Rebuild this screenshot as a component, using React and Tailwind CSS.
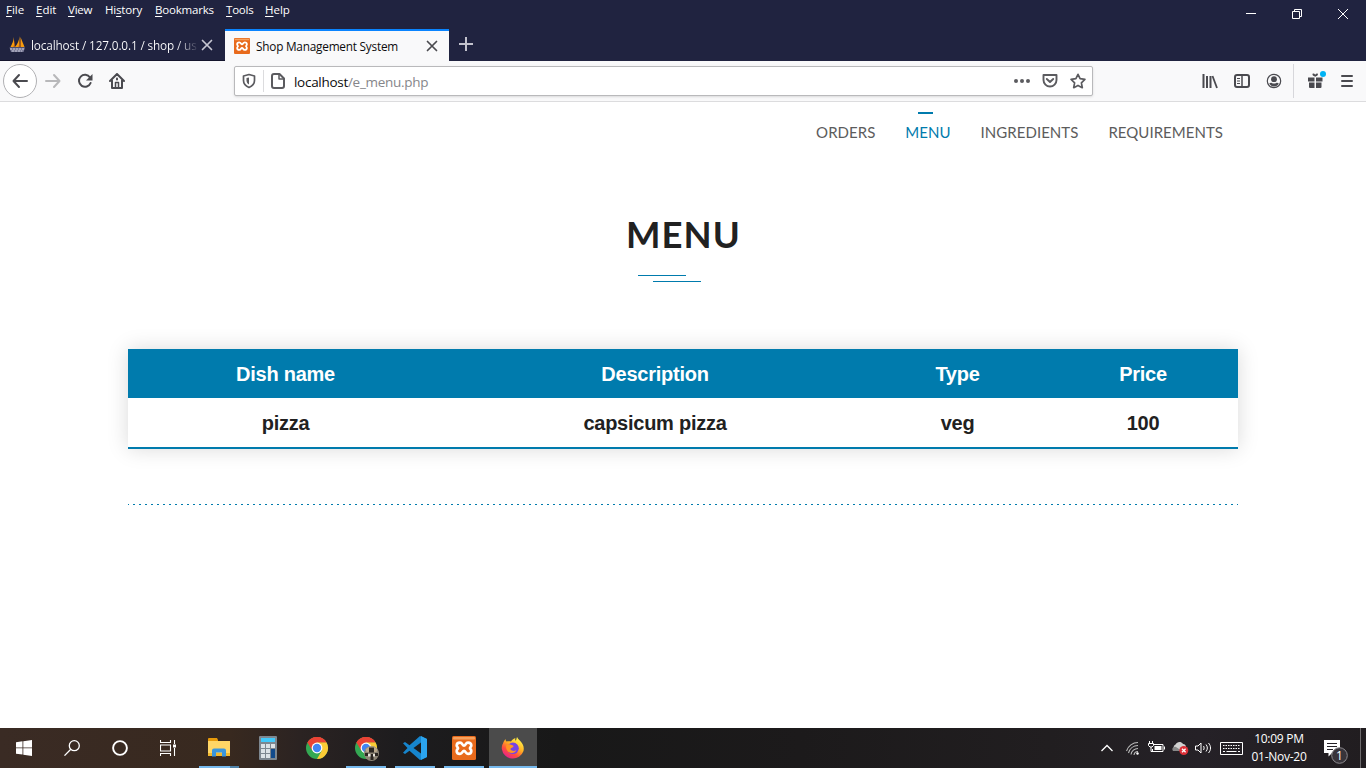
import React from "react";

const MenuItem = ({ pre = "", k, rest, cls }) => (
  <span className={"whitespace-nowrap " + cls}>
    {pre}
    <span className="underline decoration-1 underline-offset-2">{k}</span>
    {rest}
  </span>
);

const Close = ({ c }) => (
  <svg width="12" height="12" viewBox="0 0 12 12" stroke={c} strokeWidth="1.7" strokeLinecap="round" className="shrink-0">
    <path d="M1.5 1.5l9 9M10.5 1.5l-9 9" />
  </svg>
);

const Xampp = ({ s }) => (
  <svg width={s} height={s} viewBox="0 0 24 24" className="shrink-0">
    <rect width="24" height="24" rx="1.5" fill="#e86a1c" />
    <rect x="1" y="1" width="22" height="2.500" rx="1" fill="#f6a25e" />
    <path
      d="M12 9.700C10.300 9.700 10.500 6.600 8 6.600C5.600 6.600 4.700 8 4.700 9.500C4.700 11 6 11.300 6 12.200C6 13.100 4.700 13.400 4.700 15C4.700 16.500 5.600 17.900 8 17.900C10.500 17.900 10.300 14.800 12 14.800C13.700 14.800 13.500 17.900 16 17.900C18.400 17.900 19.300 16.500 19.300 15C19.300 13.400 18 13.100 18 12.200C18 11.300 19.300 11 19.300 9.500C19.300 8 18.400 6.600 16 6.600C13.500 6.600 13.700 9.700 12 9.700z"
      fill="none" stroke="#fff" strokeWidth="2.700" strokeLinejoin="round"
    />
  </svg>
);

const Chrome = ({ badge }) => (
  <svg width="24" height="24" viewBox="0 0 24 24" overflow="visible">
    <circle cx="12" cy="12" r="11" fill="#34a853" />
    <path d="M12 12L2.470 6.500A11 11 0 0 1 21.530 6.500L12 6.500z" fill="#ea4335" />
    <path d="M2.470 6.500A11 11 0 0 1 21.530 6.500H12L7.300 14.700z" fill="#ea4335" />
    <path d="M12 6.500h9.530A11 11 0 0 1 12 23L16.700 14.700z" fill="#fbcb35" />
    <circle cx="12" cy="12" r="5.400" fill="#fff" />
    <circle cx="12" cy="12" r="4.200" fill="#4285f4" />
    {badge && (
      <g>
        <circle cx="17.500" cy="17.500" r="7.500" fill="#8b8375" />
        <path d="M11.500 13.500a7.500 7.500 0 0 1 12 0l-1 2.500h-10z" fill="#b9a98c" />
        <path d="M15 11.500h5v5h-5zM11 17h3v3h-3zM21 17h3v3h-3zM16.500 18h3v6h-3z" fill="#2b2622" />
        <path d="M14 18h2.500v2.500H14zM19 18h2v2.500h-2z" fill="#e6e2da" />
      </g>
    )}
  </svg>
);

const Firefox = () => (
  <svg width="24" height="24" viewBox="0 0 24 24">
    <defs>
      <linearGradient id="ff" x1=".8" y1=".1" x2=".25" y2=".95">
        <stop offset="0" stopColor="#fff14a" />
        <stop offset=".4" stopColor="#ffae22" />
        <stop offset=".7" stopColor="#ff4f3c" />
        <stop offset="1" stopColor="#e8218c" />
      </linearGradient>
    </defs>
    <path d="M2 7.500C2.500 5.500 4 3.500 4.500 3c0 1.300.5 2 1 2.500C7 5 8.500 5 10 5.500c1-2 3-3 4.500-3.500-.5 1-.4 2 .3 3L16 1c1 2.500 4 4 5.500 7 1.300 2.200 1.500 4.500 1 7A11.200 11.200 0 0 1 .8 13C.7 11 1 9 2 7.500z" fill="url(#ff)" />
    <circle cx="12" cy="12.300" r="5.800" fill="#7542e5" />
    <path d="M5.500 9c2-1.500 4-.5 6.500.5 1 .4.5 1.500-.7 2-1.300.5-1.800 1-1.800 2 2 2 4 1.500 6 .5-1 3-5 4-8 2C5.500 14.500 4.500 11.500 5.500 9z" fill="#ff9522" />
    <path d="M14.500 4.500c2.500 1 4 3.500 3.800 6.500-.8-2-2-3.400-3.300-4z" fill="#ffd33a" />
  </svg>
);

const Task = ({ children, w = "w-[48px]", bar }) => (
  <div className={"flex h-10 flex-col items-center " + w}>
    <div className="flex h-[38px] items-center justify-center pt-[2px]">{children}</div>
    {bar && <div className={"h-[2px] bg-[#76b9ed] " + bar} />}
  </div>
);

const Toolbar = () => (
  <div className="flex h-[41px] items-center border-b border-[#dcdcde] bg-[#f9f9fa] text-[#4a4a4f]">
    <div className="ml-[3px] flex size-[34px] items-center justify-center rounded-full border border-[#b1b1b4] bg-white">
      <svg width="16" height="16" viewBox="0 0 16 16" fill="none" stroke="currentColor" strokeWidth="2" strokeLinecap="round" strokeLinejoin="round"><path d="M15 8H1.500M7 2L1.500 8 7 14" /></svg>
    </div>
    <svg className="ml-2" width="16" height="16" viewBox="0 0 16 16" fill="none" stroke="#b8b8ba" strokeWidth="2" strokeLinecap="round" strokeLinejoin="round"><path d="M1 8h13.500M9 2l5.500 6L9 14" /></svg>
    <svg className="ml-4" width="16" height="16" viewBox="0 0 16 16" fill="none" stroke="currentColor" strokeWidth="2"><path d="M13 4.500A6 6 0 1 0 13.600 10" strokeLinecap="round" /><path d="M15.500 1v6.500H9z" fill="currentColor" stroke="none" /></svg>
    <svg className="ml-4" width="16" height="16" viewBox="0 0 16 16" fill="none" stroke="currentColor" strokeWidth="2" strokeLinejoin="round" strokeLinecap="round"><path d="M1 8l7-7 7 7M3 7.500V15h10V7.500" /><path d="M6.500 15V9.500h3V15" strokeWidth="1.500" /><path d="M8 5.500v1" /></svg>
    <div className="ml-[109px] flex h-[30px] w-[859px] items-center rounded-[2px] border border-[#b9b9bb] bg-white shadow-sm">
      <svg className="ml-[7px]" width="14" height="16" viewBox="0 0 14 16" fill="none" stroke="#5b5b5f" strokeWidth="1.700" strokeLinejoin="round"><path d="M7 1.500L12.500 3v4.500c0 3-2 5.500-5.500 7-3.500-1.500-5.500-4-5.500-7V3z" /><path d="M7 4.500v7C5.200 10.500 4.500 9 4.500 7.500V5z" fill="#5b5b5f" stroke="none" /></svg>
      <div className="ml-[7px] h-[22px] w-px bg-[#dcdcde]" />
      <svg className="ml-[7px]" width="14" height="16" viewBox="0 0 14 16" fill="none" stroke="#5b5b5f" strokeWidth="2" strokeLinejoin="round"><path d="M3 1h5.500L13 5.500V13a2 2 0 0 1-2 2H3a2 2 0 0 1-2-2V3a2 2 0 0 1 2-2z" /><path d="M8 1.500V6h4.500" strokeWidth="1.500" /></svg>
      <span className="ml-[9px] pt-[3px] text-[13.500px] tracking-[-0.29px] text-[#0c0c0d]">localhost<span className="text-[#86868a]">/e_menu.php</span></span>
      <div className="ml-auto mr-[6px] flex items-center gap-[12px] text-[#5b5b5f]">
        <svg width="16" height="16" viewBox="0 0 16 16" fill="currentColor"><circle cx="2" cy="8" r="2" /><circle cx="8" cy="8" r="2" /><circle cx="14" cy="8" r="2" /></svg>
        <svg width="16" height="16" viewBox="0 0 16 16" fill="none" stroke="currentColor" strokeWidth="1.900" strokeLinecap="round" strokeLinejoin="round"><path d="M1.500 2h13v5a6.500 6.500 0 0 1-13 0z" /><path d="M4.800 6L8 9l3.200-3" /></svg>
        <svg width="16" height="16" viewBox="0 0 16 16" fill="none" stroke="currentColor" strokeWidth="1.700" strokeLinejoin="round"><path d="M8 1.300l2.100 4.400 4.800.7-3.500 3.400.9 4.900L8 12.400l-4.300 2.300.9-4.900L1.100 6.400l4.800-.7z" /></svg>
      </div>
    </div>
    <div className="ml-auto flex items-center">
      <svg width="16" height="16" viewBox="0 0 16 16" stroke="currentColor" fill="none"><path d="M1.500 1v14M5 3v12M8.500 3v12" strokeWidth="2" /><path d="M10.500 3l4.500 12" strokeWidth="1.800" /></svg>
      <svg className="ml-4" width="16" height="16" viewBox="0 0 16 16" fill="none" stroke="currentColor" strokeWidth="2"><rect x="1" y="2" width="14" height="12" rx="2" /><path d="M8 2v12" strokeWidth="1.500" /><path d="M3 5.500h3M3 8h3M3 10.500h3" strokeWidth="1" /></svg>
      <svg className="ml-4" width="16" height="16" viewBox="0 0 16 16"><circle cx="8" cy="8" r="6.700" fill="none" stroke="currentColor" strokeWidth="1.200" /><circle cx="8" cy="6.200" r="2.900" fill="currentColor" /><path d="M3.200 10.500c1-1 2-1 2.600-.6 1.400.8 3 .8 4.400 0 .6-.4 1.600-.4 2.600.6A5.400 5.400 0 0 1 8 13.400a5.400 5.400 0 0 1-4.800-2.900z" fill="currentColor" /></svg>
      <div className="ml-[11px] h-[34px] w-px bg-[#d7d7db]" />
      <svg className="ml-[14px]" width="20" height="22" viewBox="0 0 20 22" fill="currentColor"><path d="M0 7.500h6.500v4H0zM8 7.500h6.500v4H8zM1 12.500h5.500V18H2a1 1 0 0 1-1-1zM8 12.500h5.500V17a1 1 0 0 1-1 1H8z" /><path d="M7.200 6.700C5 6 4.300 5 4.500 4c.8-.8 2-.3 2.700.8.700-1.100 2-1.600 2.700-.8.200 1-.5 2-2.700 2.700z" /><circle cx="15" cy="4" r="3" fill="#00b3f4" /></svg>
      <svg className="ml-[12px] mr-[12px]" width="14" height="16" viewBox="0 0 14 16" stroke="currentColor" strokeWidth="2" strokeLinecap="round"><path d="M2 3h10M2 8h10M2 13h10" /></svg>
    </div>
  </div>
);

const Browser = () => (
  <header className="font-['Open_Sans','Noto_Sans',sans-serif]">
    <div className="flex h-[61px] bg-[#202340]">
      <div className="flex flex-col">
        <div className="flex h-[29px] pl-[6px] pt-[2px] text-[11.500px] leading-[15px] text-white">
          <MenuItem k="F" rest="ile" cls="w-[30px]" />
          <MenuItem k="E" rest="dit" cls="w-8" />
          <MenuItem k="V" rest="iew" cls="w-[37px] tracking-[-0.2px]" />
          <MenuItem pre="Hi" k="s" rest="tory" cls="w-[50px] tracking-[-0.2px]" />
          <MenuItem k="B" rest="ookmarks" cls="w-[71px] tracking-[-0.2px]" />
          <MenuItem k="T" rest="ools" cls="w-[39px] tracking-[-0.2px]" />
          <MenuItem k="H" rest="elp" cls="" />
        </div>
        <div className="flex h-8 items-center">
          <div className="flex h-8 w-[225px] items-center border-b border-[#14152c] pl-[9px]">
            <svg width="17" height="17" viewBox="0 0 17 17" className="shrink-0"><path d="M5 1v10H1.500C3 8 4.500 5 5 1zM10.500 0v11H6C8.500 8 10 5 10.500 0zM11.500 1c1.500 4 3 7 4 10h-4z" fill="#f89c0e" /><path d="M6 4v7H4.500zM11.500 3v8H9.500z" fill="#ad5b18" /><path d="M.5 11.500h15.500l-1.500 4.500H2z" fill="#7b7c98" /><path d="M1 13h14M3 15h10" stroke="#d8d8e5" strokeWidth=".8" strokeDasharray="2 1" /></svg>
            <span className="ml-[5px] w-[166px] whitespace-nowrap bg-linear-to-r from-white from-88% to-white/10 bg-clip-text pt-[2px] text-[11.800px] tracking-[-0.15px] text-transparent">localhost / 127.0.0.1 / shop / us</span>
            <span className="ml-1"><Close c="#c7c7d2" /></span>
          </div>
          <div className="flex h-8 w-[224px] items-center border-t-2 border-[#0a84ff] bg-[#f9f9fa] pl-[9px]">
            <Xampp s={16} />
            <span className="ml-[6px] w-[170px] whitespace-nowrap pt-px text-[11.800px] tracking-[-0.22px] text-[#0c0c0d]">Shop Management System</span>
            <Close c="#4a4a4f" />
          </div>
          <svg className="ml-[10px] mb-[2px]" width="14" height="14" viewBox="0 0 14 14" stroke="#c2c2cd" strokeWidth="2"><path d="M7 0v14M0 7h14" /></svg>
        </div>
      </div>
      <div className="ml-auto mr-[18px] mt-[8px] flex h-3 items-center gap-9 text-white">
        <svg width="10" height="12" viewBox="0 0 10 12" stroke="currentColor"><path d="M0 5.500h10" /></svg>
        <svg width="10" height="12" viewBox="0 0 10 12" fill="none" stroke="currentColor"><path d="M.5 3.500h7v7h-7zM2.500 3V1.500h7v7H8" /></svg>
        <svg width="10" height="12" viewBox="0 0 10 12" stroke="currentColor"><path d="M0 1l10 10M10 1L0 11" /></svg>
      </div>
    </div>
    <Toolbar />
  </header>
);

const Page = () => (
  <main className="flex h-[626px] flex-col bg-white">
    <nav className="flex justify-end gap-[30px] pr-[143px] pt-[10px] font-['Lato',sans-serif] text-[15px] leading-[20px] tracking-[0.04px] text-[#5c5c5c]">
      {["ORDERS", "MENU", "INGREDIENTS", "REQUIREMENTS"].map((t) => (
        <a key={t} className={"flex flex-col items-start " + (t === "MENU" ? "text-[#007bad]" : "")}>
          <span className={"mb-[8px] ml-[13px] h-[2px] w-[15px] " + (t === "MENU" ? "bg-[#007bad]" : "")} />
          {t}
        </a>
      ))}
    </nav>
    <div className="mt-[70px] flex flex-col items-center">
      <h1 className="pl-px font-['Lato',sans-serif] text-[36.500px] font-bold leading-[44px] tracking-[1.100px] text-[#212121]">MENU</h1>
      <div className="mt-[19px] flex w-[63px] -translate-x-[14px] flex-col">
        <span className="h-px w-12 bg-[#007bad]" />
        <span className="ml-[15px] mt-[5px] h-px w-12 bg-[#007bad]" />
      </div>
    </div>
    <table className="mx-auto mt-[67px] w-[1110px] table-fixed border-collapse text-center font-['Liberation_Sans',Arial,sans-serif] text-[20px] font-bold leading-[25px] tracking-[-0.250px] shadow-[0_0_20px_rgba(0,0,0,0.15)]">
      <colgroup><col className="w-[315px]" /><col className="w-[424px]" /><col className="w-[181px]" /><col className="w-[190px]" /></colgroup>
      <thead>
        <tr className="h-[49px] bg-[#007bad] text-white *:pt-[2px]"><th>Dish name</th><th>Description</th><th>Type</th><th>Price</th></tr>
      </thead>
      <tbody>
        <tr className="h-[50px] border-b-2 border-[#007bad] text-[#212121] *:pt-[2px]"><td>pizza</td><td>capsicum pizza</td><td>veg</td><td>100</td></tr>
      </tbody>
    </table>
    <div className="mx-auto mt-[55px] h-px w-[1110px] bg-[repeating-linear-gradient(90deg,#007bad_0_1px,transparent_1px_5px,#007bad_5px_6px)]" />
  </main>
);

const Taskbar = () => (
  <footer className="flex h-10 bg-[linear-gradient(90deg,#3a2b24_0,#38291f_230px,#2b2322_300px,#1d1c1e_400px,#181818_560px,#1c1a1b_800px,#211e20_1050px,#252127_1200px,#211d20_1366px)] font-['Open_Sans','Noto_Sans',sans-serif] text-white">
    <Task><svg width="16" height="16" viewBox="0 0 16 16" fill="white"><path d="M0 2.200l6.500-.9v6.200H0zM7.300 1.200L16 0v7.500H7.300zM0 8.300h6.500v6.300L0 13.700zM7.300 8.300H16V16l-8.700-1.200z" /></svg></Task>
    <Task><svg width="16" height="16" viewBox="0 0 16 16" fill="none" stroke="white" strokeWidth="1.300"><circle cx="10.300" cy="5.700" r="5" /><path d="M6.800 9.300L.5 15.600" /></svg></Task>
    <Task><svg width="16" height="16" viewBox="0 0 16 16" fill="none" stroke="white" strokeWidth="1.900"><circle cx="8" cy="8" r="6.900" /></svg></Task>
    <Task><svg width="16" height="16" viewBox="0 0 16 16" fill="none" stroke="white"><path d="M.5 0v2.500h10V0M.5 16v-2.500h10V16M.5 5h10v6H.5zM14.500 0v4M14.500 8v8" strokeWidth="1.100" /><path d="M13 4.500h3v3h-3z" fill="white" stroke="none" /></svg></Task>
    <div className="flex h-10 w-[52px] flex-col pl-[7px]">
      <div className="flex h-[38px] items-center pl-[9px] pt-[1px]"><svg width="22" height="19" viewBox="0 0 22 19"><path d="M0 1a1 1 0 0 1 1-1h8l1 2v4H0z" fill="#e79a0b" /><path d="M0 3h22v15H0z" fill="#ffd666" /><path d="M0 15h22v3H0z" fill="#f2b92f" /><path d="M4 18.500v-6a2 2 0 0 1 2-2h10a2 2 0 0 1 2 2v6h-4v-4H8v4z" fill="#3a96dd" /></svg></div>
      <div className="flex h-[2px] w-10"><i className="w-[31px] bg-[#76b9ed]" /><i className="w-[9px] bg-[#5083a9]" /></div>
    </div>
    <Task w="w-[48px]"><svg width="18" height="24" viewBox="0 0 18 24"><rect width="18" height="24" rx="1" fill="#7d8790" /><path d="M2 2h14v4H2z" fill="#42c9fa" /><path d="M2 8h4v4H2zM7 8h4v4H7zM12 8h4v4h-4zM2 13h4v4H2zM7 13h4v4H7zM2 18h4v4H2zM7 18h4v4H7z" fill="#dce2e6" /><path d="M12 13h4v9h-4z" fill="#114a8b" /></svg></Task>
    <Task w="w-[49px]"><Chrome /></Task>
    <Task w="w-[49px]" bar="w-10"><Chrome badge /></Task>
    <Task w="w-[49px]" bar="w-10"><svg width="24" height="24" viewBox="0 0 24 24"><path d="M17 0l7 3v18l-7 3L6.500 14.800 2 18l-2-1.200L4.500 12 0 7.200 2 6l4.500 3.200z" fill="#1685cd" /><path d="M18 6.500L10.500 12l7.500 5.500z" fill="#1b1b1d" /><path d="M18 0l6 3v18l-6 3z" fill="#2ba4ef" /></svg></Task>
    <Task w="w-[50px]" bar="w-10"><Xampp s={24} /></Task>
    <div className="bg-[#4b4b4b]"><Task bar="w-12"><Firefox /></Task></div>
    <div className="ml-auto flex items-center">
      <svg width="12" height="8" viewBox="0 0 12 8" fill="none" stroke="white" strokeWidth="1.300"><path d="M.5 7L6 1.500 11.500 7" /></svg>
      <svg className="ml-[13px]" width="14" height="14" viewBox="0 0 14 14" fill="none" stroke="#bbb" strokeWidth="1.100"><path d="M.5 10A12 12 0 0 1 12 1.500M2.500 12a10 10 0 0 1 9.500-7.500M5 13.500a7 7 0 0 1 7-6M8 14a4 4 0 0 1 4-3.500" /><circle cx="11.500" cy="12.500" r="1.200" fill="white" stroke="none" /></svg>
      <svg className="ml-[8px]" width="17" height="14" viewBox="0 0 17 14" fill="none" stroke="white"><path d="M6 3.500h9v7H4.500V8M16.500 5.500v3" /><path d="M6.500 5h7v4h-7z" fill="white" stroke="none" /><path d="M1.500 0v2M4.500 0v2M.5 2.500h5v2l-1.500 1.500H2L.5 4.500zM3 6v4.500h2" /></svg>
      <svg className="ml-[7px]" width="18" height="14" viewBox="0 0 18 14"><path d="M4 10a3.500 3.500 0 0 1-.5-6.500C5 .5 9 0 11 3c2 0 3 1.500 3 3v4z" fill="#d1d1d1" /><path d="M1 10c-2-3 1-5 3-4l6 4z" fill="#888" /><circle cx="11.800" cy="9.500" r="4.500" fill="#dc3038" /><path d="M10 7.700l3.600 3.600M13.600 7.700L10 11.300" stroke="white" strokeWidth="1.300" /></svg>
      <svg className="ml-[5px]" width="17" height="14" viewBox="0 0 17 14" fill="none" stroke="white"><path d="M.5 5v4h2.500l3 3V2L3 5z" /><path d="M8.500 5c.8 1.200.8 2.800 0 4M11 3.500c1.800 2 1.800 5 0 7M13.500 2c2.700 3 2.700 7 0 10" /></svg>
      <svg className="ml-[8px]" width="23" height="13" viewBox="0 0 23 13" fill="none" stroke="white"><path d="M.5.5h22v12H.5z" /><path d="M3 3.500h17M3 6.500h17" strokeDasharray="1.500 1" /><path d="M3 9.500h2M6.500 9.500h10M18 9.500h2" /></svg>
      <div className="ml-[6px] flex w-[60px] flex-col items-center whitespace-nowrap pb-px text-[12px] leading-[18px] tracking-[-0.26px]"><span>10:09 PM</span><span>01-Nov-20</span></div>
      <svg className="ml-[15px] mr-[10px] mt-[5px]" width="26" height="26" viewBox="0 0 26 26"><path d="M0 2h16v13H8l-3.500 3.500V15H0z" fill="white" /><path d="M3 5.500h10M3 8.500h10M3 11.500h6" stroke="#242026" /><circle cx="15.500" cy="17.500" r="7.800" fill="#38343a" stroke="#8c8a8e" /><text x="15.500" y="22" textAnchor="middle" fontSize="12" fill="white">1</text></svg>
      <div className="h-10 w-px bg-[#6d6a6c] mr-[5px]" />
    </div>
  </footer>
);

export default function App() {
  return (
    <div className="flex h-[768px] w-[1366px] flex-col overflow-hidden">
      <Browser />
      <Page />
      <Taskbar />
    </div>
  );
}
